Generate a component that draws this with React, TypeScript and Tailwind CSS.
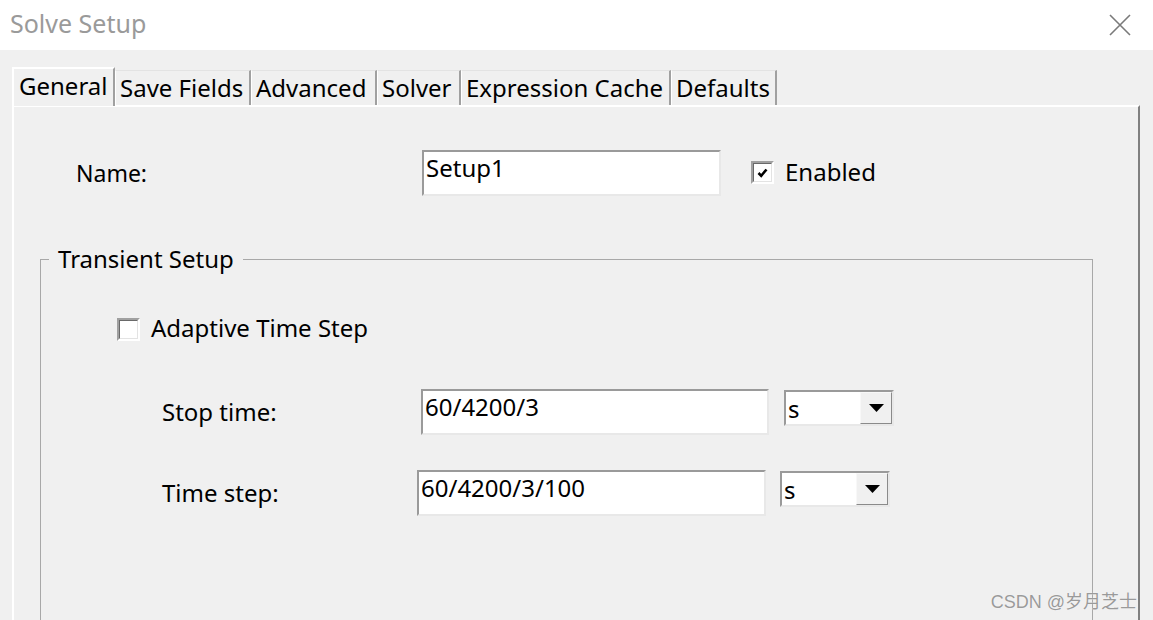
import React from 'react';

const FONT = '"Noto Sans", "Noto Sans CJK SC", sans-serif';

function CheckBox({ checked }: { checked?: boolean }) {
  return (
    <div className="w-[23px] h-[23px] border-2 border-t-[#a0a0a0] border-l-[#a0a0a0] border-b-white border-r-white">
      <div className="w-full h-full bg-white border border-t-[#696969] border-l-[#696969] border-b-[#e3e3e3] border-r-[#e3e3e3] flex items-center justify-center">
        {checked && (
          <svg width="11" height="10" viewBox="0 0 11 10">
            <path d="M1.5 5 L4.2 7.8 L9.5 1.5" fill="none" stroke="#000" strokeWidth="2.6" />
          </svg>
        )}
      </div>
    </div>
  );
}

function Field({ value, w }: { value: string; w: string }) {
  return (
    <div
      className={`${w} h-[46px] bg-white border-2 border-t-[#9a9a9a] border-l-[#9a9a9a] border-b-[#e8e8e8] border-r-[#e8e8e8] pl-[2px] pt-[1px] text-[24px] leading-[30px] text-black whitespace-nowrap`}
    >
      {value}
    </div>
  );
}

function Combo() {
  return (
    <div className="w-[110px] h-[36px] bg-white border-2 border-t-[#9a9a9a] border-l-[#9a9a9a] border-b-[#e8e8e8] border-r-[#e8e8e8] flex">
      <div className="flex-1 pl-[2px] text-[24px] leading-[34px] text-black">s</div>
      <div className="w-[32px] h-full bg-[#f0f0f0] border border-t-[#f8f8f8] border-l-[#f8f8f8] border-b-[#8a8a8a] border-r-[#8a8a8a] flex items-center justify-center">
        <svg width="15" height="8" viewBox="0 0 15 8">
          <path d="M0 0 H15 L7.5 8 Z" fill="#000" />
        </svg>
      </div>
    </div>
  );
}

const tabs = [
  { label: 'Save Fields', w: 'w-[136px]' },
  { label: 'Advanced', w: 'w-[126px]' },
  { label: 'Solver', w: 'w-[84px]' },
  { label: 'Expression Cache', w: 'w-[210px]' },
  { label: 'Defaults', w: 'w-[106px]' },
];

export default function App() {
  return (
    <div
      className="relative w-[1153px] h-[620px] overflow-hidden bg-[#f0f0f0] text-black"
      style={{ fontFamily: FONT }}
    >
      {/* title bar */}
      <div className="h-[50px] bg-white flex items-center justify-between pl-[10px] pr-[22px]">
        <span className="text-[25px] text-[#9a9a9a] leading-none -mt-[4px]">Solve Setup</span>
        <svg width="22" height="22" viewBox="0 0 22 22">
          <path d="M1 1 L21 21 M21 1 L1 21" stroke="#7a7a7a" strokeWidth="1.6" />
        </svg>
      </div>

      {/* tabs */}
      <div className="pl-[12px] pt-[17px] flex items-end h-[55px]">
        <div className="w-[103px] h-[39px] border-l-2 border-t-2 border-l-white border-t-white border-r-2 border-r-[#a0a0a0] bg-[#f0f0f0] pl-[5px] text-[24px] leading-[34px] relative z-10 -mb-[1px] whitespace-nowrap">
          General
        </div>
        {tabs.map((t) => (
          <div
            key={t.label}
            className={`${t.w} h-[35px] border-l border-t border-l-white border-t-[#e3e3e3] border-r-2 border-r-[#a0a0a0] pl-[4px] text-[24px] leading-[34px] whitespace-nowrap`}
          >
            {t.label}
          </div>
        ))}
      </div>

      {/* panel */}
      <div className="ml-[12px] w-[1128px] h-[600px] border-l-2 border-t-2 border-l-white border-t-white border-r-2 border-r-[#808080]">
        <div className="flex items-center pl-[62px] pt-[43px]">
          <div className="w-[346px] text-[23px] leading-[30px]">Name:</div>
          <Field value="Setup1" w="w-[299px]" />
          <div className="ml-[30px] -mt-[1px]">
            <CheckBox checked />
          </div>
          <span className="ml-[11px] text-[24px] leading-[30px] -mt-[2px]">Enabled</span>
        </div>

        <fieldset className="ml-[26px] mt-[48px] w-[1053px] h-[420px] border border-[#a8a8a8]">
          <legend className="ml-[8px] px-[9px] text-[24px] leading-[30px]">Transient Setup</legend>
          <div className="flex items-center pl-[76px] pt-[41px]">
            <CheckBox />
            <span className="ml-[11px] text-[24px] leading-[30px] -mt-[2px]">Adaptive Time Step</span>
          </div>
          <div className="flex items-start pl-[121px] mt-[46px]">
            <div className="w-[259px] text-[24px] leading-[30px] pt-[8px]">Stop time:</div>
            <Field value="60/4200/3" w="w-[348px]" />
            <div className="ml-[15px] mt-[1px]">
              <Combo />
            </div>
          </div>
          <div className="flex items-start pl-[121px] mt-[35px]">
            <div className="w-[255px] text-[24px] leading-[30px] pt-[8px]">Time step:</div>
            <Field value="60/4200/3/100" w="w-[349px]" />
            <div className="ml-[14px] mt-[1px]">
              <Combo />
            </div>
          </div>
        </fieldset>
      </div>

      {/* watermark */}
      <div
        className="absolute right-[16px] bottom-[9px] text-[18px] text-[#9a9a9a] leading-none"
        style={{ fontFamily: '"Liberation Sans", "Noto Sans CJK SC", sans-serif', textShadow: '0 0 1px #fff' }}
      >
        CSDN @岁月芝士
      </div>
    </div>
  );
}
